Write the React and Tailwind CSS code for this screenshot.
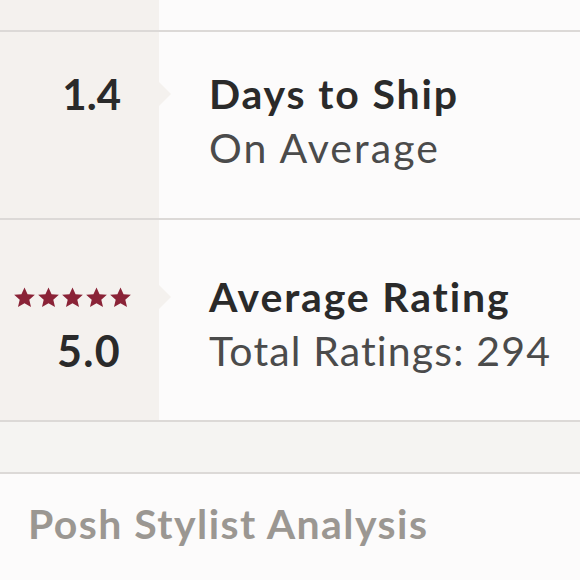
import React from "react"

function Star() {
  return (
    <svg viewBox="0 0 24 24" className="w-[23px] h-[23px]" fill="#8a2337">
      <path d="M12 1.5l3.2 7 7.6.7-5.8 5.1 1.8 7.5L12 17.9l-6.8 3.9 1.8-7.5-5.8-5.1 7.6-.7z" />
    </svg>
  )
}

function Arrow() {
  return (
    <div className="absolute left-0 top-[15px] w-0 h-0 border-y-[12px] border-y-transparent border-l-[12px] border-l-[#f4f1ee]" />
  )
}

function StatRow({ left, title, sub, height, pad, subTrack }) {
  return (
    <div className={"grid grid-cols-[159px_1fr] border-b-2 border-[#dcd9d7] " + height}>
      <div className={"bg-[#f4f1ee] pr-[38px] text-right " + pad}>{left}</div>
      <div className={pad}>
        <div className="relative pl-[50px]">
          <Arrow />
          <div className="text-[41px] leading-[54px] font-bold tracking-[0.045em] text-[#2a2a2a]">{title}</div>
          <div className={"text-[41px] leading-[54px] text-[#4b4b4b] " + subTrack}>{sub}</div>
        </div>
      </div>
    </div>
  )
}

export default function App() {
  return (
    <div className="w-[580px] h-[580px] overflow-hidden bg-[#fcfbfb] font-['Lato',sans-serif]">
      <div className="grid grid-cols-[159px_1fr] h-[32px] border-b-2 border-[#dcd9d7]">
        <div className="bg-[#f4f1ee]" />
        <div />
      </div>

      <StatRow
        height="h-[188px]"
        pad="pt-[35px]"
        title="Days to Ship"
        sub="On Average"
        subTrack="tracking-[0.05em]"
        left={<div className="text-[42px] leading-[54px] font-bold text-[#2a2a2a]">1.4</div>}
      />

      <StatRow
        height="h-[202px]"
        pad="pt-[50px]"
        title="Average Rating"
        sub="Total Ratings: 294"
        subTrack="tracking-[0.028em]"
        left={
          <>
            <div className="h-[54px] flex items-center justify-end gap-[1px] -mr-[11px]">
              <Star />
              <Star />
              <Star />
              <Star />
              <Star />
            </div>
            <div className="text-[43px] leading-[54px] font-bold tracking-[0.03em] text-[#2a2a2a]">5.0</div>
          </>
        }
      />

      <div className="h-[52px] bg-[#f5f4f2] border-b-2 border-[#dcd9d7]" />

      <div className="pl-[28px] pt-[23px]">
        <div className="text-[41px] leading-[54px] font-bold tracking-[0.035em] text-[#9b9792]">Posh Stylist Analysis</div>
      </div>
    </div>
  )
}
